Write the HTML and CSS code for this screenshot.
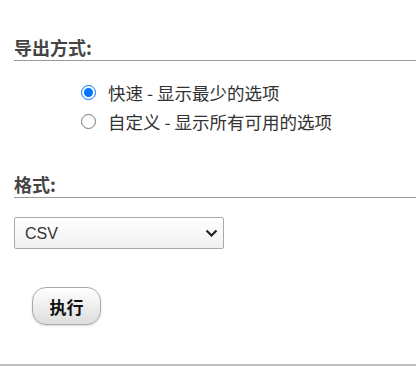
FILE: index.html
```html
<!DOCTYPE html>
<html lang="zh">
<head>
<meta charset="utf-8">
<link rel="stylesheet" href="styles.css">
</head>
<body>
<div class="page">
  <h3 class="section-title">导出方式:</h3>
  <div class="options">
    <label class="option"><input type="radio" name="m" checked><span>快速 - 显示最少的选项</span></label>
    <label class="option"><input type="radio" name="m"><span>自定义 - 显示所有可用的选项</span></label>
  </div>
  <h3 class="section-title title-format">格式:</h3>
  <div class="select-wrap">
    <select class="format-select"><option>CSV</option></select>
    <svg class="chevron" width="13" height="9" viewBox="0 0 13 9"><path d="M1.5 1.5 L6.5 6.5 L11.5 1.5" fill="none" stroke="#222" stroke-width="2.2"/></svg>
  </div>
  <div class="actions">
    <button class="go">执行</button>
  </div>
</div>
<div class="footer-line"></div>
</body>
</html>
```

FILE: styles.css
```css
html, body {
  margin: 0;
  padding: 0;
  background: #fff;
}
body {
  font-family: "Noto Sans CJK SC", "Liberation Sans", sans-serif;
  color: #333;
  width: 416px;
  height: 367px;
  overflow: hidden;
}
.page {
  padding-left: 14px;
  height: 364px;
  display: flex;
  flex-direction: column;
}
.section-title {
  margin: 36px 0 0 0;
  font-size: 18px;
  line-height: 22px;
  padding-bottom: 2px;
  font-weight: bold;
  color: #444;
  border-bottom: 1px solid #999;
}
.title-format {
  margin-top: 37px;
}
.options {
  margin-top: 17px;
  padding-left: 63px;
  display: flex;
  flex-direction: column;
}
.option {
  height: 29px;
  display: flex;
  align-items: center;
  font-size: 17.5px;
  color: #333;
}
.option input {
  margin: 0 12px 0 4px;
  width: 15px;
  height: 15px;
}
.select-wrap {
  position: relative;
  width: 210px;
  margin-top: 19px;
}
.format-select {
  appearance: none;
  -webkit-appearance: none;
  width: 210px;
  height: 32px;
  border: 1px solid #aaa;
  border-radius: 2px;
  background: linear-gradient(#fff, #f1f1f1);
  font-family: "Liberation Sans", Arial, sans-serif;
  font-size: 16px;
  color: #333;
  padding: 0 0 0 10px;
  margin: 0;
}
.chevron {
  position: absolute;
  right: 6px;
  top: 12px;
}
.actions {
  margin-top: 38px;
  padding-left: 18px;
}
.go {
  width: 69px;
  height: 38px;
  border: 1px solid #aaa;
  border-radius: 14px;
  background: linear-gradient(#fff, #ddd);
  font-family: "Noto Sans CJK SC", sans-serif;
  font-weight: bold;
  font-size: 17px;
  color: #111;
  padding: 0;
  box-shadow: 0 1px 2px rgba(0,0,0,0.15);
}
.footer-line {
  height: 2px;
  background: #c0c0c0;
}
```
